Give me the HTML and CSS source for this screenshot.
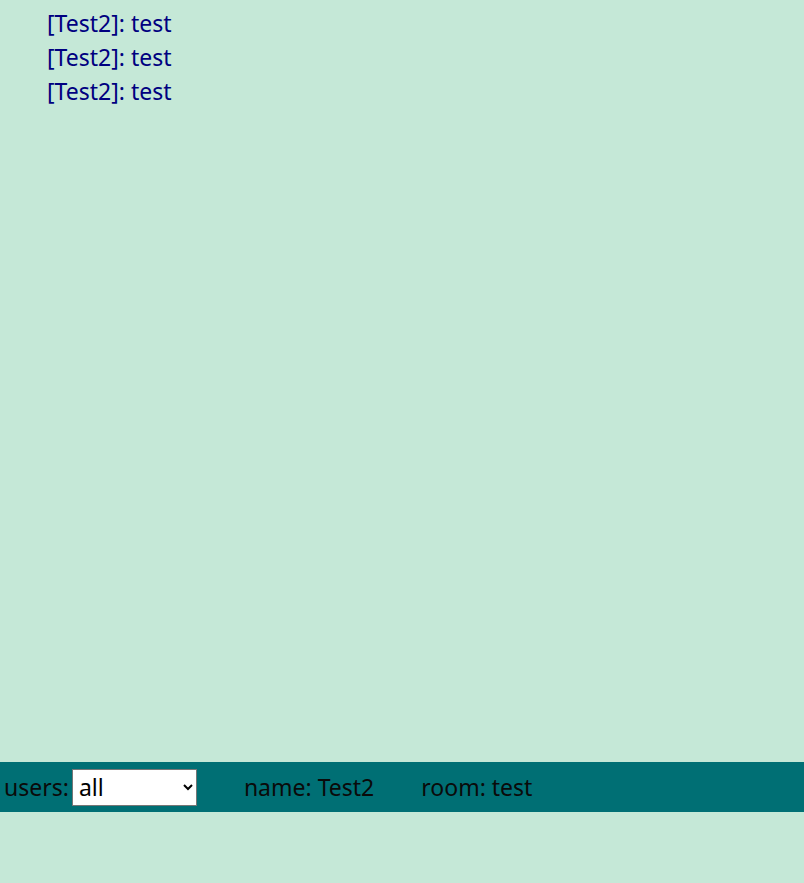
FILE: index.html
```html
<!DOCTYPE html>
<html>
<head>
<meta charset="utf-8">
<link rel="stylesheet" href="styles.css">
</head>
<body>
<div class="page">
  <ul class="messages">
    <li>[Test2]: test</li>
    <li>[Test2]: test</li>
    <li>[Test2]: test</li>
  </ul>
  <div class="bar">
    <label class="users">users:
      <select class="select">
        <option>all</option>
      </select>
    </label>
    <span class="name">name: Test2</span>
    <span class="room">room: test</span>
  </div>
</div>
</body>
</html>
```
FILE: styles.css
```css
html, body {
  margin: 0;
  padding: 0;
  background: #c5e8d7;
  font-family: "Noto Sans", "Open Sans", sans-serif;
}
.page {
  display: flex;
  flex-direction: column;
  min-height: 883px;
}
.messages {
  list-style: none;
  margin: 0;
  padding: 6px 0 0 47px;
  height: 756px;
  box-sizing: border-box;
  color: #000080;
  font-size: 23px;
  line-height: 34px;
}
.bar {
  height: 50px;
  background: #006f74;
  display: flex;
  align-items: center;
  font-size: 23px;
  color: #0a0a0a;
  margin-top: 6px;
}
.users {
  display: flex;
  align-items: center;
  gap: 3px;
  padding-left: 4px;
}
.select {
  width: 125px;
  height: 37px;
  font-family: inherit;
  font-size: 23px;
  background: #fff;
  border: 1px solid #767676;
  border-radius: 0;
  padding: 0 2px;
}
.name {
  margin-left: 47px;
}
.room {
  margin-left: 47px;
}
```
